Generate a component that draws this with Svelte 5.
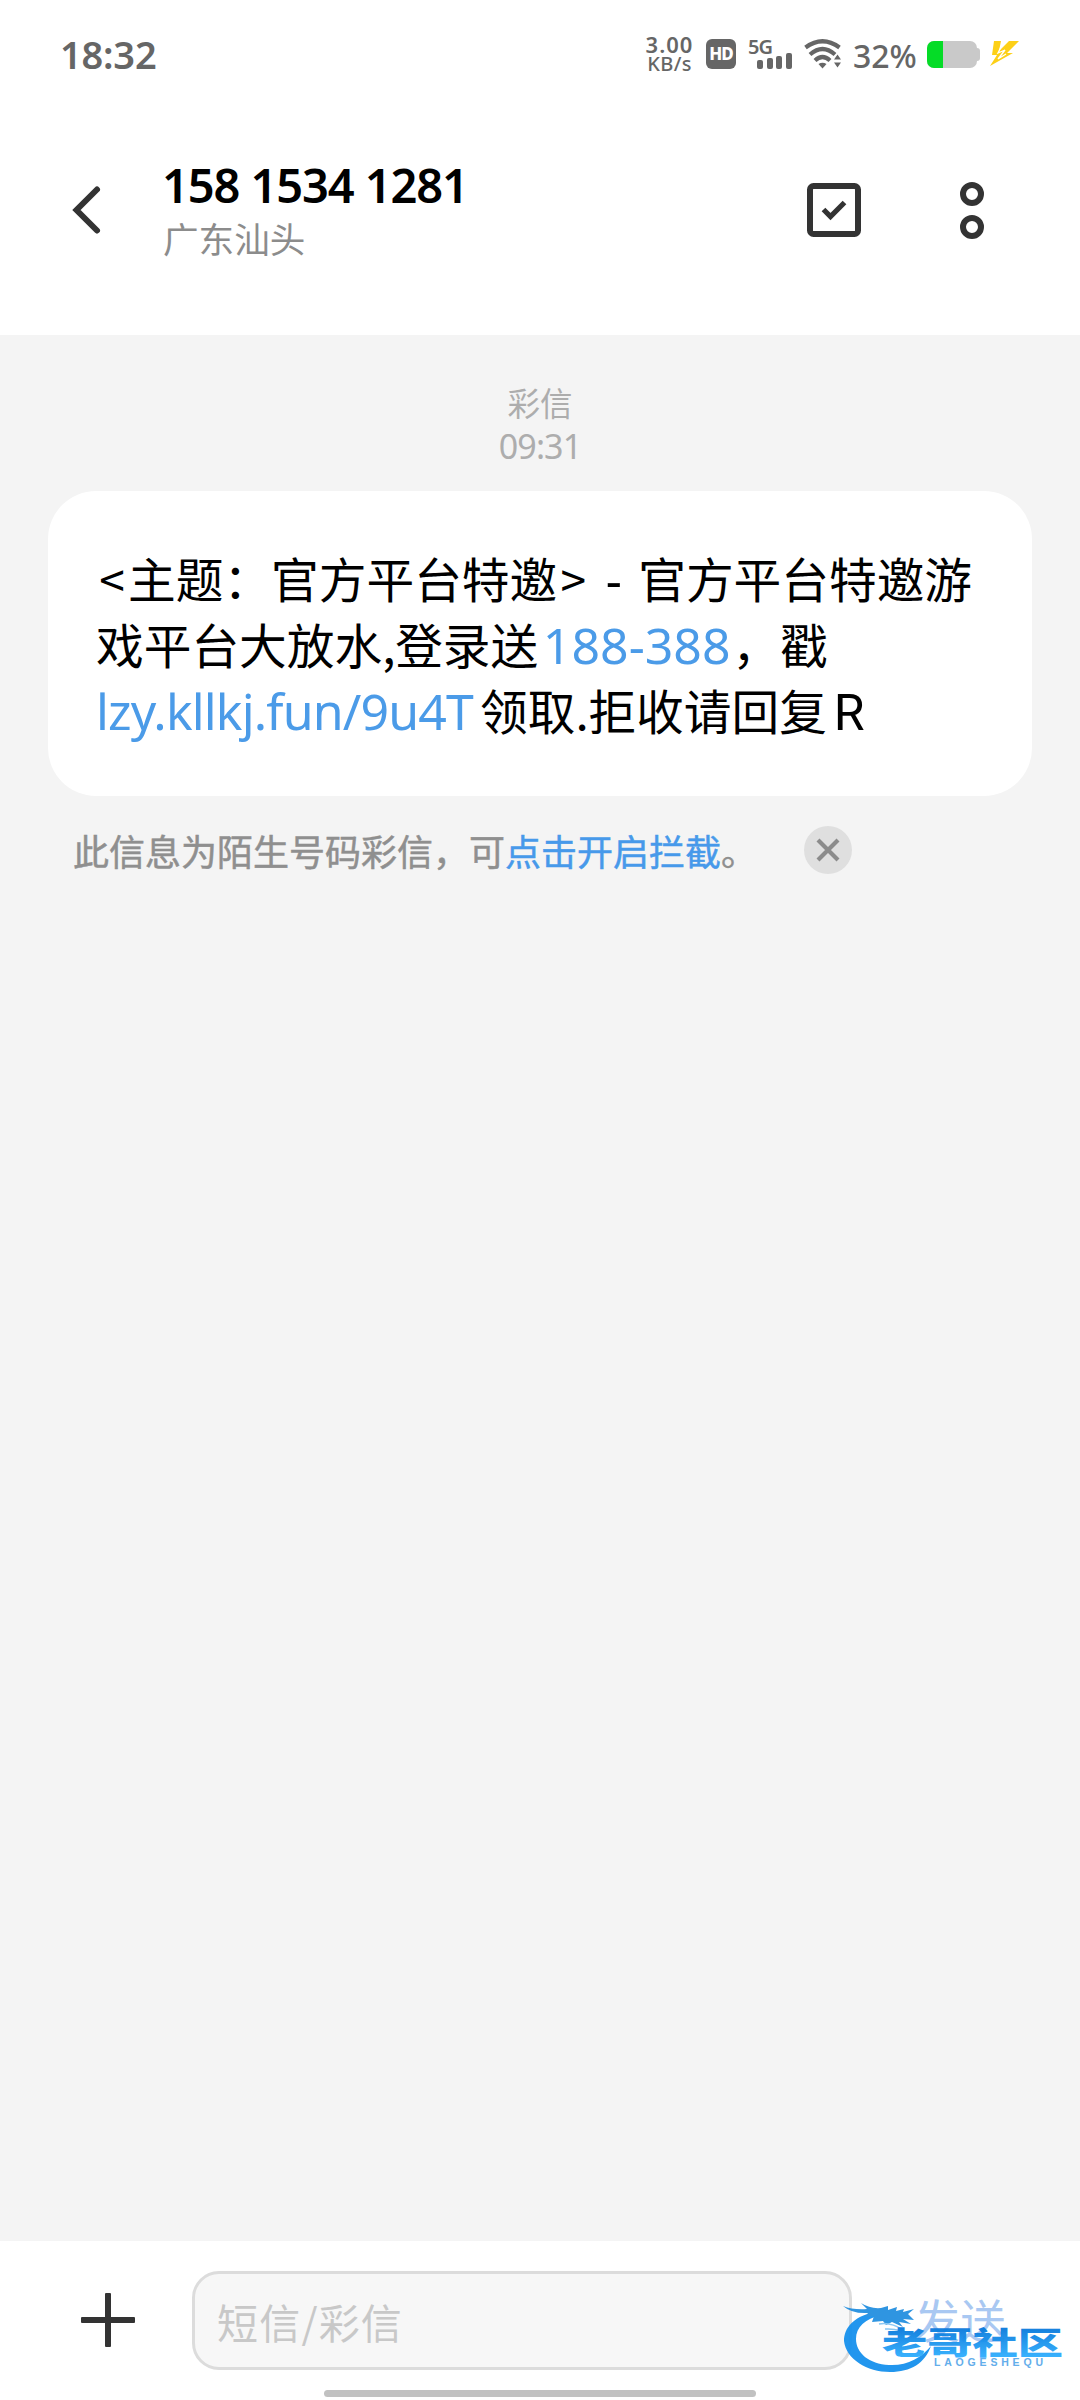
<script>
  let { number = '158 1534 1281', place = '广东汕头', time = '09:31' } = $props();

  // Latin runs use a slightly larger face than the Chinese text around them
  const lines = [
    [
      { text: '<', kind: 'sign' },
      { text: '主题：官方平台特邀' },
      { text: '>', kind: 'sign' },
      { text: '-', kind: 'dash' },
      { text: '官方平台特邀游' },
    ],
    [
      { text: '戏平台大放水' },
      { text: ',', kind: 'comma' },
      { text: '登录送' },
      { text: '188-388', kind: 'link' },
      { text: '，戳' },
    ],
    [
      { text: 'lzy.kllkj.fun/9u4T', kind: 'link url' },
      { text: '领取' },
      { text: '.', kind: 'comma' },
      { text: '拒收请回复' },
      { text: 'R', kind: 'letter' },
    ],
  ];

  const bars = [9, 11, 13, 16];
  let showNotice = $state(true);
</script>

<div class="phone">
  <div class="status">
    <span class="clock">18:32</span>
    <div class="speed"><span>3.00</span><span class="unit">KB/s</span></div>
    <div class="hd">HD</div>
    <div class="signal">
      <span class="net">5G</span>
      <div class="bars">
        {#each bars as h}
          <i style="height: {h}px"></i>
        {/each}
      </div>
    </div>
    <svg class="wifi" width="38" height="30" viewBox="0 0 38 30">
      <g fill="none" stroke="#666" stroke-width="4.2">
        <path d="M1.5 8.5Q18.500-4 35.500 8.500" />
        <path d="M6 15.500Q18.500 4.500 31 15.500" />
        <path d="M11 21.500Q18.500 14.500 26 21.500" />
      </g>
      <path d="M14.500 25Q18.500 22.500 22.500 25L18.500 29.500Z" fill="#666" />
      <path d="M30 20.500L33.500 15.500L37 20.500ZM30 23.500L33.500 28.500L37 23.500Z" fill="#666" />
    </svg>
    <span class="percent">32%</span>
    <div class="battery"><div class="level"></div></div>
    <svg class="bolt" width="30" height="26" viewBox="0 0 30 26">
      <path d="M4 0H11L9 10L19 0H29L17 12H23L0 25L7 14L2 14Z" fill="#fdd017" />
      <path d="M12 4L8 12L15 9L8 18L16 13" fill="none" stroke="#fff" stroke-width="1.300" />
    </svg>
  </div>

  <header>
    <svg class="back" width="32" height="50" viewBox="0 0 32 50">
      <path d="M25 4.500L4.500 25L25 45.500" fill="none" stroke="#333" stroke-width="6" stroke-linecap="round" />
    </svg>
    <div class="contact">
      <h1>{number}</h1>
      <p>{place}</p>
    </div>
    <svg class="select" width="54" height="54" viewBox="0 0 54 54" fill="none" stroke="#333">
      <rect x="3" y="3" width="48" height="48" rx="3.500" stroke-width="6" />
      <path d="M16.500 26.500L23.500 33.500L37.500 19.500" stroke-width="5.200" />
    </svg>
    <svg class="more" width="24" height="57" viewBox="0 0 24 57" fill="none" stroke="#333" stroke-width="6">
      <circle cx="12" cy="12" r="9" />
      <circle cx="12" cy="45" r="9" />
    </svg>
  </header>

  <main>
    <div class="stamp">
      <span>彩信</span>
      <span class="time">{time}</span>
    </div>

    <div class="bubble">
      {#each lines as line}
        <div class="line">{#each line as part}<span class={part.kind}>{part.text}</span>{/each}</div>
      {/each}
    </div>

    {#if showNotice}
      <div class="notice">
        <span>此信息为陌生号码彩信，可<b>点击开启拦截</b>。</span>
        <button aria-label="关闭" onclick={() => (showNotice = false)}>
          <svg width="24" height="24" viewBox="0 0 24 24">
            <path d="M2 2L22 22M22 2L2 22" stroke="#8b8b8b" stroke-width="4.200" />
          </svg>
        </button>
      </div>
    {/if}
  </main>

  <footer>
    <svg class="plus" width="54" height="54" viewBox="0 0 54 54">
      <rect x="24" width="6" height="54" rx="1" fill="#333" />
      <rect y="24" width="54" height="6" rx="1" fill="#333" />
    </svg>
    <div class="field">短信/彩信</div>
    <span class="send">发送</span>
    <svg class="brand" width="240" height="80" viewBox="0 0 240 80">
      <defs>
        <linearGradient id="blue" x1="0" y1="0" x2="0" y2="1">
          <stop offset="0.250" stop-color="#0879dc" />
          <stop offset="0.900" stop-color="#2eafff" />
        </linearGradient>
      </defs>
      <path d="M33 13C12 18 3 29 3 42C5 60 26 73 49 73C70 73 84 64 90 47C80 59 66 67 48 66C28 65 15 54 15 40C15 28 24 20 40 16Z" fill="#1590ed" />
      <path d="M2 7Q12 11 26 10L20 4Q29 10 40 9L47 7L47 11L56 8L55 12L63 10L62 13L73 10L67 15L73 21L62 20L70 25L58 23L62 28L51 23L45 26L42 22L31 23L33 17L24 18L27 14Q11 15 2 7Z" fill="#238fe0" />
      <path d="M38 25Q50 23 62 31M44 30Q59 29 70 37" fill="none" stroke="#83c4f3" stroke-width="1.500" />
      <text class="name" transform="translate(41 54.500) scale(1.460 1)" fill="url(#blue)">老哥社区</text>
      <text class="latin" x="93" y="67" textLength="109">LAOGESHEQU</text>
    </svg>
    <div class="home"></div>
  </footer>
</div>

<style>
  :global(body) {
    margin: 0;
    background: #fff;
  }

  .phone {
    display: flex;
    flex-direction: column;
    width: 1080px;
    height: 2400px;
    overflow: hidden;
    font-family: 'Noto Sans CJK SC', sans-serif;
    white-space: nowrap;
  }

  .status {
    display: flex;
    align-items: center;
    box-sizing: border-box;
    height: 108px;
    padding: 0 0 0 60px;
    color: #666;
    font-family: 'Noto Sans', sans-serif;
    font-weight: 600;
  }

  .status > * {
    flex: none;
  }

  .clock {
    width: 583px;
    font-size: 38px;
    line-height: 50px;
    letter-spacing: -0.2px;
  }

  .speed {
    display: flex;
    flex-direction: column;
    width: 53px;
    text-align: center;
    font-size: 22px;
    line-height: 19px;
    letter-spacing: 1px;
  }

  .unit {
    font-size: 20px;
    font-weight: 500;
    letter-spacing: 0.3px;
  }

  .hd {
    width: 30px;
    height: 30px;
    margin-left: 10px;
    border-radius: 6px;
    background: #666;
    color: #fff;
    font-size: 17px;
    font-weight: 800;
    line-height: 30px;
    text-align: center;
    letter-spacing: -1px;
  }

  .signal {
    width: 45px;
    height: 30px;
    margin-left: 12px;
  }

  .net {
    display: block;
    height: 14px;
    font-size: 20px;
    line-height: 16px;
    letter-spacing: -1px;
  }

  .bars {
    display: flex;
    align-items: flex-end;
    gap: 3.7px;
    height: 16px;
    padding-left: 9px;
  }

  .bars i {
    width: 6px;
    border-radius: 2px;
    background: #666;
  }

  .wifi {
    margin-left: 11px;
  }

  .percent {
    width: 74px;
    margin-left: 11px;
    padding-top: 3px;
    font-size: 32px;
    font-weight: 500;
    line-height: 44px;
    letter-spacing: -0.1px;
  }

  .battery {
    position: relative;
    width: 50px;
    height: 27px;
    border-radius: 7px;
    background: #c9c9c9;
  }

  .battery::after {
    content: '';
    position: absolute;
    left: 49px;
    top: 7px;
    width: 4px;
    height: 13px;
    border-radius: 0 3px 3px 0;
    background: #c9c9c9;
  }

  .level {
    width: 16px;
    height: 27px;
    border-radius: 7px 0 0 7px;
    background: #05dc27;
  }

  .bolt {
    margin-left: 13px;
  }

  header {
    display: flex;
    align-items: center;
    box-sizing: border-box;
    height: 227px;
    padding: 0 0 23px 72px;
  }

  .contact {
    width: 643px;
    margin-left: 58px;
  }

  h1 {
    margin: 0;
    font-family: 'Noto Sans', sans-serif;
    font-size: 47px;
    font-weight: 600;
    line-height: 58px;
    letter-spacing: -1.1px;
  }

  .contact p {
    margin: 0 0 2px 1px;
    color: #8c8c8c;
    font-size: 35.6px;
    line-height: 48px;
  }

  .select {
    margin-left: 2px;
  }

  .more {
    margin-left: 99px;
  }

  main {
    flex: 1;
    background: #f4f4f4;
  }

  .stamp {
    display: flex;
    flex-direction: column;
    align-items: center;
    padding-top: 45px;
    color: #adadad;
    font-size: 32.5px;
    line-height: 43px;
  }

  .time {
    padding-top: 2px;
    font-family: 'Noto Sans', sans-serif;
    font-size: 34px;
    letter-spacing: -0.9px;
  }

  .bubble {
    box-sizing: border-box;
    height: 305px;
    margin: 23px 48px 0;
    padding: 54px 48px 0;
    border-radius: 48px;
    background: #fff;
    color: #000;
    font-size: 47.7px;
  }

  .line {
    height: 66px;
    line-height: 66px;
  }

  .line .sign {
    display: inline-block;
    width: 32px;
    text-align: center;
    font-size: 46px;
  }

  .line .dash {
    display: inline-block;
    width: 49px;
    text-align: center;
    font-family: 'Noto Sans', sans-serif;
    font-size: 50px;
  }

  .line .comma {
    display: inline-block;
    width: 13px;
  }

  .line .letter {
    margin-left: 7px;
    font-family: Roboto, sans-serif;
    font-size: 50px;
  }

  .line .link {
    display: inline-block;
    width: 191px;
    padding-left: 3px;
    color: #4b9be8;
    font-family: 'Noto Sans', sans-serif;
    font-size: 50px;
    line-height: 60px;
    text-align: center;
  }

  .line .url {
    width: 384px;
    padding-left: 0;
    text-align: left;
    letter-spacing: -0.85px;
  }

  .notice {
    display: flex;
    align-items: center;
    height: 60px;
    margin-top: 24px;
    padding-left: 73px;
    color: #8f8f8f;
    font-size: 36px;
    -webkit-text-stroke: 0.5px;
  }

  .notice b {
    color: #4799ea;
    font-weight: 400;
  }

  .notice button {
    display: flex;
    align-items: center;
    justify-content: center;
    width: 48px;
    height: 48px;
    margin-left: 47px;
    padding: 0;
    border: none;
    border-radius: 50%;
    background: #dfdfdf;
  }

  footer {
    position: relative;
    display: flex;
    box-sizing: border-box;
    height: 159px;
    padding: 30px 0 0 81px;
    background: #fff;
  }

  .plus {
    margin-top: 22px;
  }

  .field {
    box-sizing: border-box;
    width: 660px;
    height: 99px;
    margin-left: 57px;
    padding-left: 22px;
    border: 3px solid #dcdcdc;
    border-radius: 27px;
    background: #f7f7f7;
    color: #c8c8c8;
    font-size: 41px;
    line-height: 94px;
    letter-spacing: 1.2px;
  }

  .send {
    margin-left: 62px;
    color: #a9c8f2;
    font-size: 46px;
    line-height: 94px;
  }

  .brand {
    position: absolute;
    left: 841px;
    top: 58px;
    opacity: 0.94;
  }

  .name {
    font-size: 31px;
    font-weight: 900;
  }

  .latin {
    fill: #5aa9ea;
    font-family: 'Liberation Sans', sans-serif;
    font-size: 10.5px;
    font-weight: 700;
  }

  .home {
    position: absolute;
    left: 324px;
    top: 149px;
    width: 432px;
    height: 7px;
    border-radius: 4px;
    background: #c1c1c1;
  }
</style>
